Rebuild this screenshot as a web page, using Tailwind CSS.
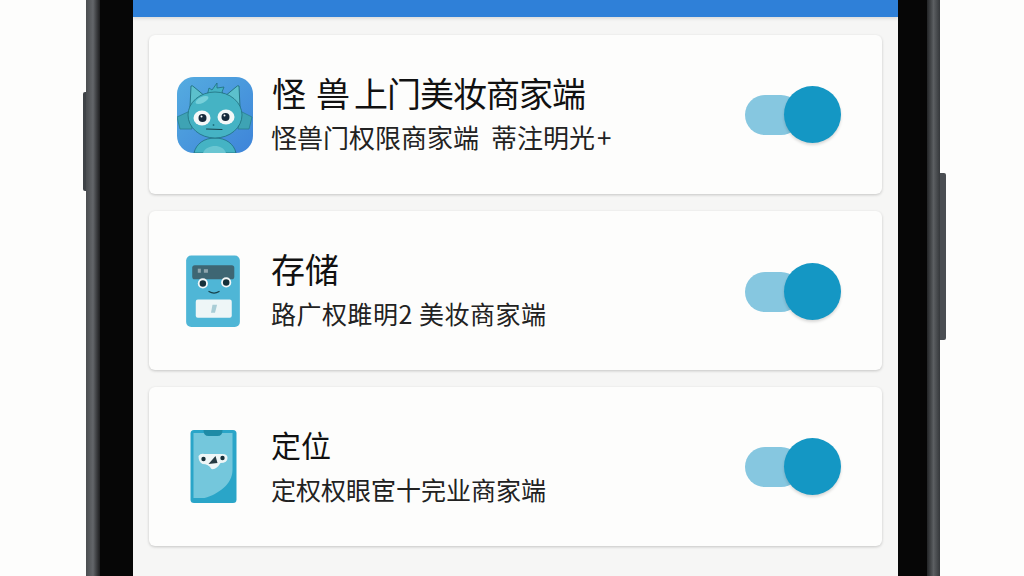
<!DOCTYPE html>
<html lang="zh-CN">
<head>
    <meta charset="UTF-8">
    <title>权限设置</title>
    <meta name="viewport" content="width=device-width, initial-scale=1">
    <script src="https://cdn.jsdelivr.net/npm/@tailwindcss/browser@4"></script>
</head>
<body class="bg-[#fdfdfc] font-['Noto_Sans_CJK_SC','Noto_Sans',sans-serif]">

<div class="w-[1024px] h-[576px] overflow-hidden flex pl-[83px]">
    <!-- left side button -->
    <div class="w-[3px] h-[99px] mt-[92px] bg-[#3f4347] rounded-l-[2px]"></div>

    <!-- phone body -->
    <div class="w-[14px] h-full bg-gradient-to-r from-[#4a4d50] via-[#63666a] to-[#1c1d1f]"></div>
    <div class="w-[33px] h-full bg-[#060606]"></div>

    <!-- screen -->
    <div class="w-[765px] h-full bg-[#f6f6f5]">
        <div class="h-[17px] bg-[#2f80d8] shadow-[0_2px_3px_rgba(0,0,0,0.1)]"></div>

        <div class="px-4 pt-[18px] flex flex-col gap-[17px]">
            <!-- card 1 -->
            <div class="h-[159px] bg-[#fdfdfc] rounded-[6px] shadow-[0_1px_3px_rgba(0,0,0,0.2)] flex items-center pl-[28px] pr-[41px]">
                <div class="w-[76px] h-[76px] mr-[18px] flex items-center justify-center shrink-0">
                    <svg width="76" height="76" viewBox="7 8 76 76">
                        <defs>
                            <linearGradient id="bgOne" x1="0" y1="0" x2="1" y2="1">
                                <stop offset="0" stop-color="#55ace0"/>
                                <stop offset="1" stop-color="#3e84d9"/>
                            </linearGradient>
                        </defs>
                        <rect x="7" y="8" width="76" height="76" rx="17" fill="url(#bgOne)"/>
                        <path d="M20 42 L7 48 L10 60 L22 60 Z" fill="#3ea3b4" stroke="#2a7f90" stroke-width="0.8"/>
                        <path d="M70 42 L82 48 L79 60 L68 60 Z" fill="#3ea3b4" stroke="#2a7f90" stroke-width="0.8"/>
                        <path d="M24 84 C26 75 34 69 45 69 C56 69 64 75 66 84 Z" fill="#45b3c4" stroke="#206f7d" stroke-width="0.8"/>
                        <path d="M56 84 C54 79 50 77 45 77 C40 77 35 79 33 84 Z" fill="#6ac6d2"/>
                        <path d="M20 38 L21 17 Q22 16 24 18 L36 28 Z" fill="#5cc0cc" stroke="#206f7d" stroke-width="0.9"/>
                        <path d="M70 38 L69 17 Q68 16 66 18 L54 28 Z" fill="#5cc0cc" stroke="#206f7d" stroke-width="0.9"/>
                        <path d="M37 27 L39 19 L42 21 L47 14 L47 19 L54 18 L52 23 L55 27 Z" fill="#45b3c4" stroke="#206f7d" stroke-width="0.8"/>
                        <ellipse cx="45" cy="46" rx="27" ry="23" fill="#45b3c4" stroke="#206f7d" stroke-width="0.8"/>
                        <ellipse cx="32" cy="31" rx="7" ry="3" fill="#77d0da" transform="rotate(-25 32 31)"/>
                        <ellipse cx="32" cy="49" rx="8.500" ry="7.500" fill="#f4f8f8"/>
                        <ellipse cx="56" cy="48" rx="8.500" ry="7.500" fill="#f4f8f8"/>
                        <circle cx="32.500" cy="49" r="4" fill="#15293a"/>
                        <circle cx="55.500" cy="48" r="4" fill="#15293a"/>
                        <circle cx="31.500" cy="47.500" r="1" fill="#ffffff"/>
                        <circle cx="54.500" cy="46.500" r="1" fill="#ffffff"/>
                        <circle cx="43.500" cy="56" r="0.9" fill="#206f7d"/>
                        <path d="M36.500 60 L52 60.500" stroke="#17404a" stroke-width="1.100" stroke-linecap="round"/>
                    </svg>
                </div>
                <div class="flex-1 flex flex-col gap-[7px] -mt-[2px]">
                    <div class="text-[34px] leading-[40px] text-[#111111] whitespace-nowrap"><span class="ml-[1px] mr-[10px]">怪</span><span class="mr-[4px]">兽</span><span class="tracking-[-1px]">上门美妆商家端</span></div>
                    <div class="text-[26px] leading-[34px] text-[#222222] whitespace-nowrap"><span class="mr-[12px]">怪兽门权限商家端</span>蒂注明光<span class="ml-[2px]">+</span></div>
                </div>
                <div class="relative w-[96px] h-[57px] shrink-0">
                    <div class="absolute left-0 top-[9px] w-[56px] h-[40px] rounded-full bg-[#86c7e0]"></div>
                    <div class="absolute right-0 top-0 w-[57px] h-[57px] rounded-full bg-[#1497c4] shadow-[0_2px_3px_rgba(0,0,0,0.15)]"></div>
                </div>
            </div>

            <!-- card 2 -->
            <div class="h-[159px] bg-[#fdfdfc] rounded-[6px] shadow-[0_1px_3px_rgba(0,0,0,0.2)] flex items-center pl-[26px] pr-[41px]">
                <div class="w-[76px] h-[76px] mr-[20px] flex items-center justify-center shrink-0">
                    <svg width="56" height="72" viewBox="15.500 15 53 71">
                        <rect x="15.500" y="15.500" width="53" height="70.500" rx="5" fill="#4fb6d6"/>
                        <rect x="21.500" y="25" width="41.500" height="14" rx="2.500" fill="#3e6673"/>
                        <rect x="27" y="28.500" width="3" height="4" fill="#8fa6ae"/>
                        <rect x="33" y="29" width="4" height="3.500" fill="#8fa6ae"/>
                        <circle cx="32" cy="43" r="5" fill="#f2f7f8"/>
                        <circle cx="55" cy="42" r="5" fill="#f2f7f8"/>
                        <circle cx="32" cy="43" r="3.200" fill="#14303a"/>
                        <circle cx="55" cy="42" r="3.200" fill="#14303a"/>
                        <path d="M38 51 Q43 54 48 51" fill="none" stroke="#17404a" stroke-width="1.200" stroke-linecap="round"/>
                        <rect x="25" y="59" width="35.500" height="18" rx="2" fill="#eef6f7"/>
                        <path d="M41.500 64 L46 64 L44 72 L40 72 Z" fill="#a9cdd6"/>
                    </svg>
                </div>
                <div class="flex-1 flex flex-col gap-[7px] -mt-[2px]">
                    <div class="text-[34px] leading-[40px] text-[#111111] whitespace-nowrap">存储</div>
                    <div class="text-[25px] leading-[34px] tracking-[0.500px] text-[#222222] whitespace-nowrap">路广权雎明2 美妆商家端</div>
                </div>
                <div class="relative w-[96px] h-[57px] mt-[2px] shrink-0">
                    <div class="absolute left-0 top-[9px] w-[56px] h-[40px] rounded-full bg-[#86c7e0]"></div>
                    <div class="absolute right-0 top-0 w-[57px] h-[57px] rounded-full bg-[#1497c4] shadow-[0_2px_3px_rgba(0,0,0,0.15)]"></div>
                </div>
            </div>

            <!-- card 3 -->
            <div class="h-[159px] bg-[#fdfdfc] rounded-[6px] shadow-[0_1px_3px_rgba(0,0,0,0.2)] flex items-center pl-[26px] pr-[41px]">
                <div class="w-[76px] h-[76px] mr-[20px] flex items-center justify-center shrink-0">
                    <svg width="47" height="73" viewBox="20 10 46 73">
                        <rect x="20" y="10" width="46" height="73" rx="3.500" fill="#2aa5c8"/>
                        <path d="M23 13 H62 V50 C62 64 48 74 34 78 H23 Z" fill="#74c7dc"/>
                        <path d="M33 10 H52 Q52 16 47 16 H38 Q33 16 33 10 Z" fill="#1f8ba6"/>
                        <path d="M28 36 Q30 33 34 34 L52 34 Q57 34 57 38 Q57 43 50 43 Q46 50 41 49 Q38 44 32 44 Q28 42 28 36 Z" fill="#eef6f7"/>
                        <circle cx="33" cy="39" r="2.200" fill="#17303a"/>
                        <circle cx="52" cy="38" r="2.200" fill="#17303a"/>
                        <path d="M38 44 L45 36 L47 43 Z" fill="#263a42"/>
                    </svg>
                </div>
                <div class="flex-1 flex flex-col gap-[9px] -mt-[2px]">
                    <div class="text-[30px] leading-[38px] text-[#111111] whitespace-nowrap">定位</div>
                    <div class="text-[25px] leading-[34px] text-[#222222] whitespace-nowrap">定权权眼宦十完业商家端</div>
                </div>
                <div class="relative w-[96px] h-[57px] shrink-0">
                    <div class="absolute left-0 top-[9px] w-[56px] h-[40px] rounded-full bg-[#86c7e0]"></div>
                    <div class="absolute right-0 top-0 w-[57px] h-[57px] rounded-full bg-[#1497c4] shadow-[0_2px_3px_rgba(0,0,0,0.15)]"></div>
                </div>
            </div>
        </div>
    </div>

    <!-- right side of body -->
    <div class="w-[29px] h-full bg-[#060606]"></div>
    <div class="w-[13px] h-full bg-gradient-to-r from-[#232527] via-[#5c5f62] to-[#35383b]"></div>
    <div class="w-[6px] h-[167px] mt-[173px] bg-[#4a4e52] rounded-r-[2px]"></div>
</div>

</body>
</html>
